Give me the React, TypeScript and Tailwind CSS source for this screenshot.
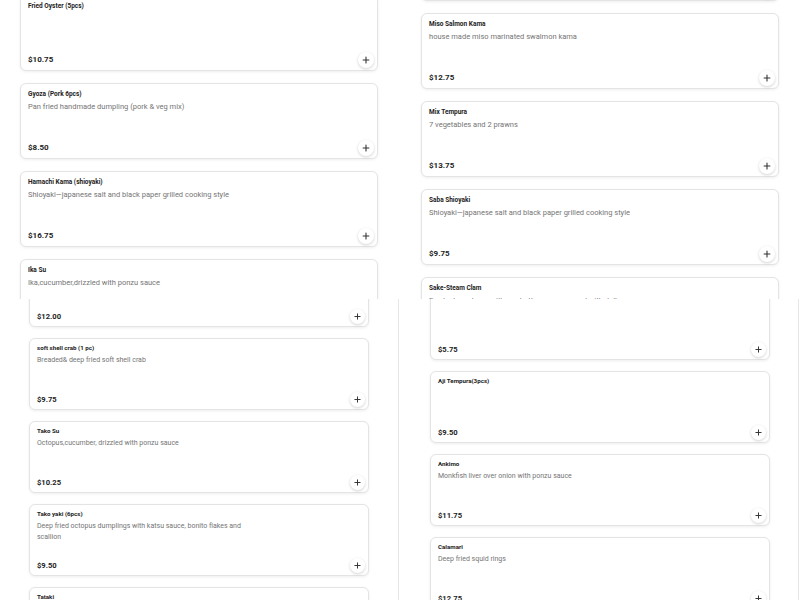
import { Plus } from 'lucide-react';

type Item = { name: string; desc?: string; price: string; tall?: boolean };

const topLeft: Item[] = [
  { name: 'Fried Oyster (5pcs)', price: '$10.75' },
  { name: 'Gyoza (Pork 6pcs)', desc: 'Pan fried handmade dumpling (pork & veg mix)', price: '$8.50' },
  { name: 'Hamachi Kama (shioyaki)', desc: 'Shioyaki—japanese salt and black paper grilled cooking style', price: '$16.75' },
  { name: 'Ika Su', desc: 'Ika,cucumber,drizzled with ponzu sauce', price: '$12.00' },
];

const topRight: Item[] = [
  { name: 'Edamame', desc: 'Steamed soy beans with sea salt', price: '$5.75' },
  { name: 'Miso Salmon Kama', desc: 'house made miso marinated swalmon kama', price: '$12.75' },
  { name: 'Mix Tempura', desc: '7 vegetables and 2 prawns', price: '$13.75' },
  { name: 'Saba Shioyaki', desc: 'Shioyaki—japanese salt and black paper grilled cooking style', price: '$9.75' },
  { name: 'Sake-Steam Clam', desc: 'Fresh clam steam with soy butter sauce, served with daikon', price: '$14.75' },
];

const bottomLeft: Item[] = [
  { name: 'Ika Su', desc: 'Ika,cucumber,drizzled with ponzu sauce', price: '$12.00' },
  { name: 'soft shell crab (1 pc)', desc: 'Breaded& deep fried soft shell crab', price: '$9.75' },
  { name: 'Tako Su', desc: 'Octopus,cucumber, drizzled with ponzu sauce', price: '$10.25' },
  { name: 'Tako yaki (6pcs)', desc: 'Deep fried octopus dumplings with katsu sauce, bonito flakes and scallion', price: '$9.50' },
  { name: 'Tataki', desc: 'Seared tuna with ponzu sauce', price: '$13.50' },
];

const bottomRight: Item[] = [
  { name: 'Agedashi Tofu', desc: 'Lightly fried tofu in warm dashi broth', price: '$5.75', tall: true },
  { name: 'Aji Tempura(3pcs)', price: '$9.50' },
  { name: 'Ankimo', desc: 'Monkfish liver over onion with ponzu sauce', price: '$11.75' },
  { name: 'Calamari', desc: 'Deep fried squid rings', price: '$12.75' },
];

function AddButton({ small }: { small?: boolean }) {
  return (
    <button
      className={`flex items-center justify-center rounded-full bg-white text-[#333] shadow-[0_1px_3px_rgba(0,0,0,0.18)] ${
        small ? 'h-[15px] w-[15px]' : 'h-4 w-4'
      }`}
      aria-label="Add"
    >
      <Plus size={small ? 9 : 10} strokeWidth={2.6} />
    </button>
  );
}

function LargeCard({ item }: { item: Item }) {
  return (
    <div className="flex h-[76px] w-[358px] shrink-0 flex-col rounded-[6px] border border-[#e4e4e4] bg-white pl-[7px] pr-[3px] pt-[6px] pb-[2px] shadow-[0_1px_3px_rgba(0,0,0,0.07)]">
      <div className="text-[6.5px] font-bold leading-[8px] text-[#222]">{item.name}</div>
      {item.desc && (
        <div className="mt-[4px] max-w-[240px] text-[7.5px] leading-[10px] text-[#757575]">{item.desc}</div>
      )}
      <div className="mt-auto flex items-center justify-between">
        <span className="text-[8px] font-bold text-[#222]">{item.price}</span>
        <AddButton />
      </div>
    </div>
  );
}

function SmallCard({ item }: { item: Item }) {
  return (
    <div
      className={`flex w-[340px] shrink-0 flex-col rounded-[6px] border border-[#e4e4e4] bg-white pl-[7px] pr-[3px] pt-[5px] pb-[2px] shadow-[0_1px_3px_rgba(0,0,0,0.07)] ${
        item.tall ? 'h-[110px]' : 'h-[72px]'
      }`}
    >
      <div className="text-[6.2px] font-bold leading-[8px] text-[#222]">{item.name}</div>
      {item.desc && (
        <div className="mt-[3px] max-w-[218px] text-[7px] leading-[10.5px] text-[#757575]">{item.desc}</div>
      )}
      <div className="mt-auto flex items-center justify-between">
        <span className="text-[7.6px] font-bold text-[#222]">{item.price}</span>
        <AddButton small />
      </div>
    </div>
  );
}

export default function App() {
  return (
    <div className="h-[600px] w-[800px] overflow-hidden bg-white font-['Roboto',sans-serif]">
      <section className="relative flex h-[299px] overflow-hidden pl-[20px]">
        <div className="mt-[-5px] flex flex-col gap-[12px]">
          {topLeft.map((item) => (
            <LargeCard key={item.name} item={item} />
          ))}
        </div>
        <div className="ml-[43px] mt-[-75px] flex flex-col gap-[12px]">
          {topRight.map((item) => (
            <LargeCard key={item.name} item={item} />
          ))}
        </div>
      </section>

      <section className="flex h-[301px] overflow-hidden">
        <div className="w-[399px] shrink-0 overflow-hidden border-r border-[#e6e6e6] pl-[29px]">
          <div className="mt-[-44px] flex flex-col gap-[11px]">
            {bottomLeft.map((item) => (
              <SmallCard key={item.name} item={item} />
            ))}
          </div>
        </div>
        <div className="w-[400px] shrink-0 overflow-hidden border-r border-[#e6e6e6] pl-[31px]">
          <div className="mt-[-49px] flex flex-col gap-[11px]">
            {bottomRight.map((item) => (
              <SmallCard key={item.name} item={item} />
            ))}
          </div>
        </div>
      </section>
    </div>
  );
}
